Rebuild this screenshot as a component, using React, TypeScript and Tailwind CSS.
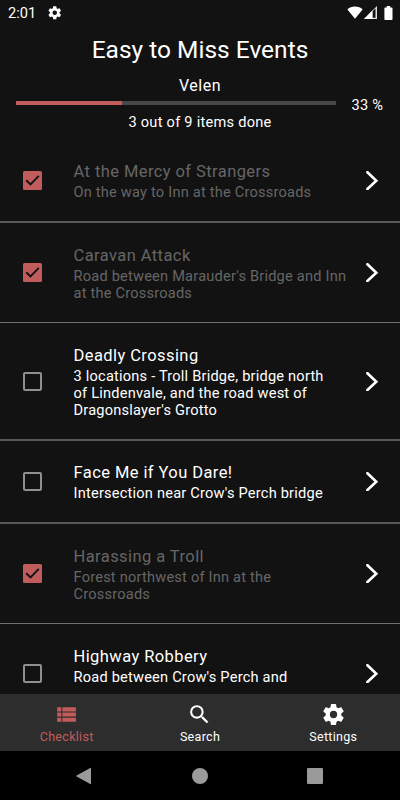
import React from 'react';
import { MdSearch, MdViewList } from 'react-icons/md';

interface ChecklistItem {
  id: number;
  title: string;
  lines: string[];
  done: boolean;
  rowClass: string;
}

const items: ChecklistItem[] = [
  {
    id: 1,
    title: 'At the Mercy of Strangers',
    lines: ['On the way to Inn at the Crossroads'],
    done: true,
    rowClass: 'h-[85px] pt-[2px] border-b-2 border-[#5a585a]'
  },
  {
    id: 2,
    title: 'Caravan Attack',
    lines: ["Road between Marauder's Bridge and Inn", 'at the Crossroads'],
    done: true,
    rowClass: 'h-[100px] border-b border-[#727072]'
  },
  {
    id: 3,
    title: 'Deadly Crossing',
    lines: ['3 locations - Troll Bridge, bridge north', 'of Lindenvale, and the road west of', "Dragonslayer's Grotto"],
    done: false,
    rowClass: 'h-[118px] border-b-2 border-[#5a585a]'
  },
  {
    id: 4,
    title: 'Face Me if You Dare!',
    lines: ["Intersection near Crow's Perch bridge"],
    done: false,
    rowClass: 'h-[83px] border-b-2 border-[#5a585a]'
  },
  {
    id: 5,
    title: 'Harassing a Troll',
    lines: ['Forest northwest of Inn at the', 'Crossroads'],
    done: true,
    rowClass: 'h-[100px] border-b border-[#727072]'
  },
  {
    id: 6,
    title: 'Highway Robbery',
    lines: ["Road between Crow's Perch and", '\u00a0'],
    done: false,
    rowClass: 'h-[100px] border-b border-[#727072]'
  }
];

const Gear: React.FC<{ className?: string }> = ({ className }) => (
  <svg className={className} viewBox="0 0 24 24" fill="currentColor">
    <path d="M12 15.500A3.500 3.500 0 0 1 8.500 12 3.500 3.500 0 0 1 12 8.500a3.500 3.500 0 0 1 3.500 3.500 3.500 3.500 0 0 1-3.500 3.500m7.430-2.530c.04-.32.07-.64.07-.97s-.03-.66-.07-1l2.110-1.630c.19-.15.24-.42.12-.64l-2-3.460c-.12-.22-.39-.31-.61-.22l-2.490 1c-.52-.39-1.060-.73-1.690-.98l-.37-2.650A.506.506 0 0 0 14 2h-4c-.25 0-.46.18-.5.42l-.37 2.650c-.63.25-1.170.59-1.690.98l-2.490-1c-.22-.09-.49 0-.61.22l-2 3.460c-.13.22-.07.49.12.64L4.570 11c-.04.34-.07.67-.07 1s.03.65.07.97l-2.110 1.660c-.19.15-.25.42-.12.64l2 3.460c.12.22.39.3.61.22l2.490-1.010c.52.4 1.060.74 1.690.99l.37 2.650c.04.24.25.42.5.42h4c.25 0 .46-.18.5-.42l.37-2.650c.63-.26 1.170-.59 1.690-.99l2.490 1.010c.22.08.49 0 .61-.22l2-3.460c.12-.22.07-.49-.12-.64z" />
  </svg>
);

const StatusBar: React.FC = () => (
  <div className="flex h-[25px] shrink-0 items-center pl-2 pr-[7px]">
    <span className="pt-[2px] text-[14.600px] leading-none">2:01</span>
    <Gear className="ml-[10.500px] h-[15.500px] w-[15.500px]" />
    <div className="ml-auto flex items-center">
      <svg className="h-[13px] w-4" viewBox="0 0 16 13" fill="currentColor">
        <path d="M8 12.800L.4 3.400C2.400 1.600 5 .6 8 .6s5.600 1 7.600 2.800z" />
      </svg>
      <svg className="ml-px h-[13px] w-[13px]" viewBox="0 0 13 13">
        <path d="M13 0v13H0z" fill="#dcdcdc" />
        <path d="M8.700 4.300v8.700H0z" fill="#ffffff" />
        <path d="M8.700 5.300L11.500 2.600V11.700H8.700z" fill="#121212" />
      </svg>
      <svg className="ml-[7px] h-[14px] w-[9px]" viewBox="0 0 9 14" fill="currentColor">
        <path d="M2.700 0h3.400v1.400H7.700q.8 0 .8.800v11q0 .8-.8.800H1.200q-.8 0-.8-.8v-11q0-.8.800-.8h1.500z" />
      </svg>
    </div>
  </div>
);

const Checkbox: React.FC<{ checked: boolean }> = ({ checked }) =>
  checked ? (
    <svg className="h-[19px] w-[19px]" viewBox="0 0 19 19">
      <rect width="19" height="19" rx="1.500" fill="#c15c5c" />
      <path d="M3.200 9.200l4.300 4.200 8.300-8.500" fill="none" stroke="#121212" strokeWidth="1.900" />
    </svg>
  ) : (
    <div className="h-[19px] w-[19px] rounded-[2px] border-2 border-[#8f8f8f]" />
  );

const ChecklistRow: React.FC<{ item: ChecklistItem }> = ({ item }) => (
  <div className={`flex shrink-0 items-center pl-[23px] ${item.rowClass}`}>
    <Checkbox checked={item.done} />
    <div className={`ml-[31.500px] w-[292.500px] whitespace-nowrap pt-px ${item.done ? 'text-[#666666]' : 'text-white'}`}>
      <div className="mb-[2px] text-[16.500px] leading-[21px] tracking-[0.420px]">{item.title}</div>
      {item.lines.map((line) => (
        <div key={line} className="text-[14.600px] leading-[17px] tracking-[0.210px]">
          {line}
        </div>
      ))}
    </div>
    <svg className="h-[19px] w-[13px] text-white" viewBox="0 0 13 19" fill="none" stroke="currentColor" strokeWidth="2.600" strokeLinecap="round">
      <path d="M1.400 1.200L10.300 9.700L1.400 18" />
    </svg>
  </div>
);

const App: React.FC = () => {
  return (
    <div className="flex h-[800px] w-[400px] flex-col overflow-hidden bg-[#121212] font-['Roboto',sans-serif] text-white">
      <StatusBar />
      <header className="flex h-[113px] shrink-0 flex-col">
        <h1 className="h-[50px] text-center text-[24.500px] leading-[50px]">Easy to Miss Events</h1>
        <div className="h-[26px] text-center text-[16px] leading-[21px] tracking-[0.500px]">Velen</div>
        <div className="flex h-1 items-center pl-4">
          <div className="h-1 w-80 bg-[#474747]">
            <div className="h-1 w-[106px] bg-[#c15c5c]" />
          </div>
          <span className="ml-[15.500px] pt-[4px] text-[14.600px] leading-none tracking-[0.250px]">33 %</span>
        </div>
        <div className="mt-[9px] text-center text-[14.600px] leading-[17px] tracking-[0.250px]">3 out of 9 items done</div>
      </header>
      <main className="flex min-h-0 flex-1 flex-col overflow-hidden">
        {items.map((item) => (
          <ChecklistRow key={item.id} item={item} />
        ))}
      </main>
      <nav className="grid h-[57px] shrink-0 grid-cols-3 bg-[#2d2d2d] text-[12.500px] tracking-[0.300px]">
        <div className="flex flex-col items-center pt-[8px] text-[#c15c5c]">
          <MdViewList className="h-[25px] w-[25px]" />
          <span className="mt-[2px] leading-[15px]">Checklist</span>
        </div>
        <div className="flex flex-col items-center pt-[8px]">
          <MdSearch className="h-[25px] w-[25px]" />
          <span className="mt-[2px] leading-[15px]">Search</span>
        </div>
        <div className="flex flex-col items-center pt-[8px]">
          <Gear className="h-[25px] w-[25px]" />
          <span className="mt-[2px] leading-[15px]">Settings</span>
        </div>
      </nav>
      <div className="flex h-[49px] shrink-0 items-center bg-black pl-[76px] text-[#9a9a9a]">
        <svg className="h-[18px] w-[15px]" viewBox="0 0 15 18" fill="currentColor">
          <path d="M15 1.200v15.600q0 .8-.8.300L.6 9.500q-.6-.5 0-1L14.200.900q.8-.5.800.300z" />
        </svg>
        <div className="ml-[101px] h-4 w-4 rounded-full bg-[#9a9a9a]" />
        <div className="ml-[99px] h-4 w-4 rounded-[1px] bg-[#9a9a9a]" />
      </div>
    </div>
  );
};

export default App;
